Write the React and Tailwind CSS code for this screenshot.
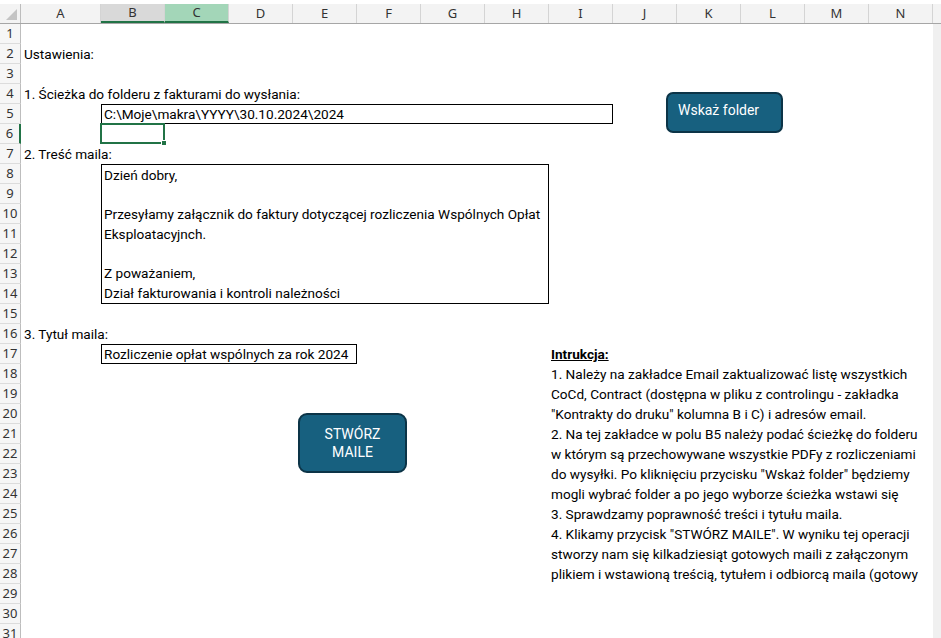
import React from 'react';

const COLUMNS = ['A', 'B', 'C', 'D', 'E', 'F', 'G', 'H', 'I', 'J', 'K', 'L', 'M', 'N'];
const ROWS = Array.from({ length: 31 }, (_, i) => i + 1);

const cellFont = { fontFamily: 'Roboto, "Noto Sans", sans-serif' };
const headFont = { fontFamily: '"Noto Sans", "Open Sans", sans-serif' };

const instructions = [
  '1. Należy na zakładce Email zaktualizować listę wszystkich',
  'CoCd, Contract (dostępna w pliku z controlingu - zakładka',
  '"Kontrakty do druku" kolumna B i C) i adresów email.',
  '2. Na tej zakładce w polu B5 należy podać ścieżkę do folderu',
  'w którym są przechowywane wszystkie PDFy z rozliczeniami',
  'do wysyłki. Po kliknięciu przycisku "Wskaż folder" będziemy',
  'mogli wybrać folder a po jego wyborze ścieżka wstawi się',
  '3. Sprawdzamy poprawność treści i tytułu maila.',
  '4. Klikamy przycisk "STWÓRZ MAILE". W wyniku tej operacji',
  'stworzy nam się kilkadziesiąt gotowych maili z załączonym',
  'plikiem i wstawioną treścią, tytułem i odbiorcą maila (gotowy',
];

const ColumnHeader = ({ letter }) => {
  let cls = 'bg-[#f3f3f3] text-[#333]';
  if (letter === 'B') cls = 'bg-[#d9d9d9] text-[#333] border-b-2 border-b-[#217346]';
  if (letter === 'C') cls = 'bg-[#a3d6b8] text-[#333] border-b-2 border-b-[#217346]';
  return (
    <div
      className={`flex items-center justify-center border-r border-[#d4d4d4] text-[13px] ${cls} ${
        letter === 'A' ? 'w-[80px]' : 'w-[64px]'
      } shrink-0`}
      style={headFont}
    >
      {letter}
    </div>
  );
};

const Line = ({ children, className = '' }) => (
  <div className={`h-5 leading-5 whitespace-nowrap ${className}`}>{children}</div>
);

export default function App() {
  return (
    <div className="relative w-[941px] h-[638px] overflow-hidden bg-white text-[13.6px] text-black" style={cellFont}>
      <div className="h-1 bg-white" />

      {/* column headers */}
      <div className="flex h-5 border-b border-[#a6a6a6] bg-[#f3f3f3]">
        <div className="relative w-[21px] shrink-0 border-r border-[#bdbdbd]">
          <div className="absolute right-[3px] bottom-[3px] h-0 w-0 border-l-[11px] border-t-[11px] border-l-transparent border-t-transparent border-r-0 border-b-[11px] border-b-[#c4c4c4]" />
        </div>
        {COLUMNS.map((c) => (
          <ColumnHeader key={c} letter={c} />
        ))}
        <div className="flex-1 bg-[#f3f3f3]" />
      </div>

      <div className="flex">
        {/* row numbers */}
        <div className="w-[21px] shrink-0" style={headFont}>
          {ROWS.map((r) => (
            <div
              key={r}
              className={`h-5 flex items-center justify-center border-b border-[#dcdcdc] bg-[#f6f6f6] text-[13px] text-[#333] ${
                r === 6 ? 'border-r-2 border-r-[#217346] bg-[#e2e2e2]' : 'border-r border-r-[#bdbdbd]'
              }`}
            >
              {r}
            </div>
          ))}
        </div>

        {/* sheet */}
        <div className="grid grid-cols-[80px_repeat(13,64px)] grid-rows-[repeat(31,20px)] w-[912px] shrink-0">
          <Line className="col-start-1 row-start-2 pl-[3px]">Ustawienia:</Line>
          <Line className="col-start-1 row-start-4 pl-[3px]">1. Ścieżka do folderu z fakturami do wysłania:</Line>

          <div className="col-start-2 col-span-8 row-start-5 border border-black pl-[2px] leading-[18px] whitespace-nowrap">
            C:\Moje\makra\YYYY\30.10.2024\2024
          </div>

          <div className="relative col-start-2 row-start-6 -mt-px -ml-px border-2 border-[#217346]">
            <div className="absolute -right-[4px] -bottom-[4px] h-[6px] w-[6px] bg-[#217346] border border-white" />
          </div>

          <Line className="col-start-1 row-start-7 pl-[3px]">2. Treść maila:</Line>

          <div className="col-start-2 col-span-7 row-start-8 row-span-7 border border-black pl-[2px] flex flex-col whitespace-nowrap">
            <div className="h-[19px] leading-5">Dzień dobry,</div>
            <div className="h-5" />
            <div className="h-5 leading-5">
              Przesyłamy załącznik do faktury dotyczącej rozliczenia Wspólnych Opłat
            </div>
            <div className="h-5 leading-5">Eksploatacyjnch.</div>
            <div className="h-5" />
            <div className="h-5 leading-5">Z poważaniem,</div>
            <div className="h-5 leading-5">Dział fakturowania i kontroli należności</div>
          </div>

          <Line className="col-start-1 row-start-16 pl-[3px]">3. Tytuł maila:</Line>

          <div className="col-start-2 col-span-4 row-start-17 border border-black pl-[2px] leading-[18px] whitespace-nowrap">
            Rozliczenie opłat wspólnych za rok 2024
          </div>

          <div className="col-start-9 col-span-6 row-start-17 row-span-12 pl-[2px]">
            <Line className="font-bold underline">Intrukcja:</Line>
            {instructions.map((t) => (
              <Line key={t}>{t}</Line>
            ))}
          </div>
        </div>

        <div className="flex-1 bg-[#f0f0f0]" />
      </div>

      {/* macro buttons floating over the sheet */}
      <button
        className="absolute left-[666px] top-[92px] w-[117px] h-[41px] rounded-[7px] border-2 border-[#0c3447] bg-[#17607f] pl-[10px] pb-[4px] text-left text-[14px] text-white"
        style={cellFont}
      >
        Wskaż folder
      </button>

      <button
        className="absolute left-[298px] top-[413px] w-[109px] h-[60px] rounded-[9px] border-2 border-[#0c3447] bg-[#17607f] flex flex-col items-center justify-center text-[14px] leading-[18px] text-white"
        style={cellFont}
      >
        <span>STWÓRZ</span>
        <span>MAILE</span>
      </button>
    </div>
  );
}
